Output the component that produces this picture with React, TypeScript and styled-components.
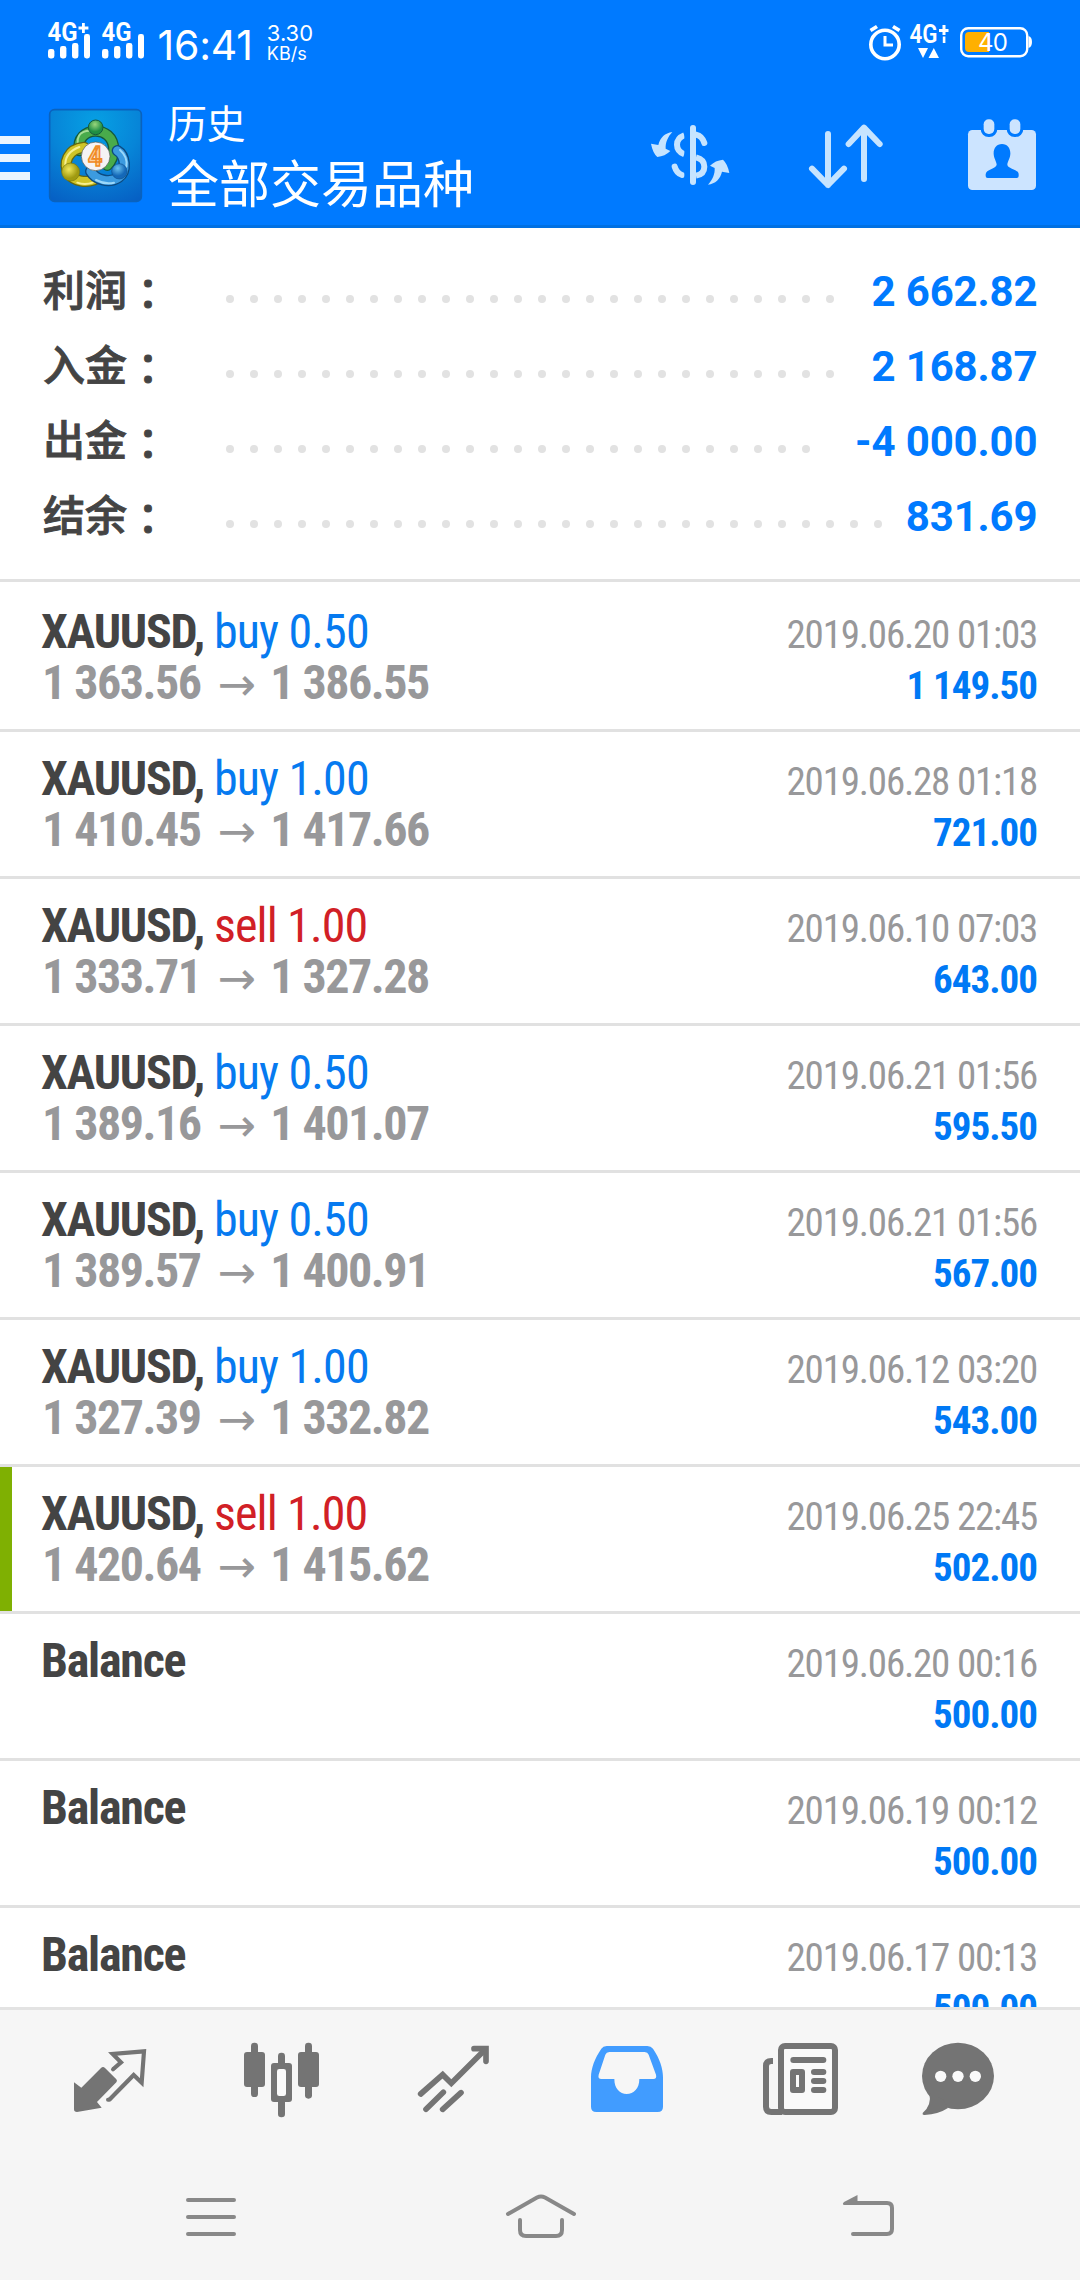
import React from 'react';
import styled, { createGlobalStyle } from 'styled-components';

const BLUE = '#007aff';
const CONDENSED = '"Roboto Condensed", Roboto, "Liberation Sans", sans-serif';
const STATUS_FONT = 'Inter, Roboto, sans-serif';

const GlobalStyle = createGlobalStyle`
  body { margin: 0; background: #fff; }
  svg { display: block; flex: none; overflow: visible; }
`;

const Screen = styled.div`
  width: 1080px;
  height: 2280px;
  display: flex;
  flex-direction: column;
  overflow: hidden;
  background: #fff;
`;

/* ---------- status bar ---------- */

const StatusBar = styled.header`
  flex: none;
  box-sizing: border-box;
  height: 84px;
  padding: 22px 48px 0;
  display: flex;
  align-items: flex-start;
  color: #fff;
  background: ${BLUE};
  font-family: ${STATUS_FONT};
`;

const Signals = styled.div`
  display: flex;
  gap: 12px;
`;

const Clock = styled.div`
  margin: 0 14px 0 13.5px;
  font-size: 41px;
  line-height: 46px;
  letter-spacing: -0.2px;
`;

const Speed = styled.div`
  padding-top: 2px;
  display: flex;
  flex-direction: column;
`;

const SpeedLine = styled.span<{ $size: number }>`
  font-size: ${(p) => p.$size}px;
  line-height: 19.5px;
`;

const StatusIcons = styled.div`
  margin-left: auto;
  padding-top: 2px;
  display: flex;
  align-items: flex-start;
`;

const DataSlot = styled.div`
  margin: 0 11px 0 8px;
`;

const BatterySlot = styled.div`
  padding-top: 3px;
`;

/* ---------- app bar ---------- */

const AppBar = styled.div`
  flex: none;
  box-sizing: border-box;
  height: 144px;
  padding-right: 42px;
  display: flex;
  align-items: flex-start;
  color: #fff;
  background: ${BLUE};
  border-bottom: 3px solid #0070e2;
`;

const MenuButton = styled.div`
  width: 30px;
  padding-top: 52px;
  display: flex;
  flex-direction: column;
  gap: 10px;
`;

const MenuLine = styled.span`
  height: 8px;
  background: #eaf5ff;
`;

const LogoSlot = styled.div`
  margin: 25px 26px 0 19px;
`;

const Titles = styled.div`
  padding-top: 11px;
  display: flex;
  flex-direction: column;
  font-family: "Noto Sans CJK SC", sans-serif;
`;

const Subtitle = styled.div`
  font-size: 39px;
  line-height: 52px;
  letter-spacing: -0.5px;
`;

const Title = styled.h1`
  margin: 0;
  font-size: 51px;
  font-weight: 400;
  line-height: 69px;
`;

const Actions = styled.div`
  margin-left: auto;
  padding-top: 34px;
  display: grid;
  grid-template-columns: 156px 160px 72px;
  align-items: center;
`;

/* ---------- summary ---------- */

const Summary = styled.section`
  flex: none;
  padding: 26px 42.5px 25px 43px;
  border-bottom: 3px solid #e1e1e1;
`;

const SummaryRow = styled.div`
  height: 75px;
  display: flex;
  align-items: baseline;
`;

const Label = styled.div`
  width: 175px;
  color: #444;
  font: 500 42px/50px "Noto Sans CJK SC", sans-serif;
  -webkit-text-stroke: 0.9px #444;
`;

const Colon = styled.span`
  font-family: "Noto Sans CJK JP", sans-serif;
  line-height: 1;
  vertical-align: -4px;
`;

const Leader = styled.div`
  align-self: flex-start;
  padding-top: 41px;
  display: flex;
`;

const Dot = styled.i`
  width: 8px;
  height: 8px;
  margin: 0 8.01px;
  border-radius: 50%;
  background: #e2e2e2;
`;

const Total = styled.div`
  margin-left: auto;
  color: ${BLUE};
  font: 700 42px/75px Roboto, sans-serif;
  letter-spacing: -0.15px;
`;

/* ---------- deals ---------- */

const DealList = styled.section`
  height: 1425px;
  flex: none;
  overflow: hidden;
`;

const Deal = styled.article<{ $marked?: boolean }>`
  box-sizing: border-box;
  height: 147px;
  display: flex;
  border-top: 3px solid #e1e1e1;
  background: ${(p) => (p.$marked ? 'linear-gradient(#7fb002, #7fb002) left / 12px 100% no-repeat' : 'none')};
  &:first-child { border-top-color: transparent; }
`;

const DealMain = styled.div`
  padding: 21px 0 0 42px;
  font: 700 48px/51px ${CONDENSED};
  letter-spacing: -1.5px;
  white-space: nowrap;
`;

const DealName = styled.div`
  margin-left: -1px;
  letter-spacing: -1.25px;
  color: #444;
`;

const Side = styled.span<{ $sell?: boolean }>`
  font-weight: 400;
  letter-spacing: -0.85px;
  color: ${(p) => (p.$sell ? '#d12026' : '#067af0')};
`;

const Prices = styled.div`
  color: #98989a;
`;

const Arrow = styled.span`
  margin: 0 4.4px 0 7.6px;
  font: 400 46px/1 "DejaVu Sans", sans-serif;
  letter-spacing: 0;
  vertical-align: -1px;
`;

const DealSide = styled.div`
  margin-left: auto;
  padding: 25px 43px 0 0;
  text-align: right;
  font: 400 39px/51px ${CONDENSED};
  white-space: nowrap;
`;

const DateText = styled.div`
  color: #98989a;
  letter-spacing: -1.2px;
`;

const Amount = styled.div`
  color: #0079f5;
  font-weight: 700;
  letter-spacing: -1px;
`;

/* ---------- bottom bars ---------- */

const TabBar = styled.nav`
  flex: none;
  box-sizing: border-box;
  height: 153px;
  padding: 30px 84px 0 72px;
  display: grid;
  grid-template-columns: 170px 174px 173px 172px 159px 76px;
  align-items: start;
  background: #f6f6f6;
  border-top: 3px solid #e3e3e3;
`;

const SystemBar = styled.nav`
  flex: none;
  box-sizing: border-box;
  height: 120px;
  padding: 30px 0 0 184px;
  display: grid;
  grid-template-columns: 320px 336px 60px;
  align-items: start;
  background: #f5f5f5;
`;

/* ---------- icons ---------- */

const Signal = ({ plus }: { plus?: boolean }) => (
  <svg width="42" height="37" viewBox="0 0 42 37" fill="#fff">
    <text x="-0.500" y="19" fontFamily="Roboto, sans-serif" fontSize="25" fontWeight="700" textLength="30" lengthAdjust="spacingAndGlyphs">4G</text>
    {plus && <path d="M34 1h2.800v3.600H40.400v2.800H36.800V11H34V7.400H30.500V4.600H34z" />}
    <rect x="0" y="27" width="6.400" height="9.500" rx="2.400" />
    <rect x="12" y="24" width="6.400" height="12.500" rx="2.400" />
    <rect x="24" y="21" width="6.400" height="15.500" rx="2.400" />
    <rect x="36" y="12" width="6" height="24.500" rx="2.400" />
  </svg>
);

const Alarm = () => (
  <svg width="32" height="37" viewBox="0 0 32 37" fill="none" stroke="#fff">
    <circle cx="16" cy="20.500" r="14.200" strokeWidth="3.600" />
    <path d="M16 12v9h8" strokeWidth="3" />
    <path d="M1.500 6.500L8 2.500M30.500 6.500L24 2.500" strokeWidth="3.800" />
  </svg>
);

const MobileData = () => (
  <svg width="40" height="37" viewBox="0 0 40 37" fill="#fff">
    <text x="0.500" y="19" fontFamily="Roboto, sans-serif" fontSize="25" fontWeight="600" textLength="28" lengthAdjust="spacingAndGlyphs">4G</text>
    <path d="M33.500 1h3v4h3v3h-3v3h-3V8h-3.500V5h3.500zM33.800 12.500h2.600V19h-2.600z" />
    <path d="M9 24h10l-5 10zM19.500 34h10.500l-5.200-10z" />
  </svg>
);

const Battery = () => (
  <svg width="72" height="31" viewBox="0 0 72 31">
    <rect x="1.200" y="1.200" width="66" height="28" rx="7" fill="none" stroke="#fff" strokeWidth="2.400" />
    <path d="M68.500 9q3.500 1 3.500 6t-3.500 6z" fill="#fff" />
    <path d="M9 5H29V25H9q-4 0-4-4V9q0-4 4-4z" fill="#ffb000" />
    <text x="33" y="24" textAnchor="middle" fontFamily="Inter, sans-serif" fontSize="24" fill="#fff" textLength="30">40</text>
  </svg>
);

const Logo = () => (
  <svg width="93" height="93" viewBox="27 27 279 279">
    <defs>
      <radialGradient id="tile" cx="50%" cy="15%" r="95%">
        <stop offset="0" stopColor="#06a0e4" />
        <stop offset="0.500" stopColor="#0785d8" />
        <stop offset="1" stopColor="#0660c4" />
      </radialGradient>
      <radialGradient id="green" cx="45%" cy="30%"><stop offset="0" stopColor="#9ad67c" /><stop offset="1" stopColor="#1f8f45" /></radialGradient>
      <radialGradient id="yellow" cx="40%" cy="35%"><stop offset="0" stopColor="#f0e75a" /><stop offset="1" stopColor="#a09a10" /></radialGradient>
      <radialGradient id="sky" cx="40%" cy="30%"><stop offset="0" stopColor="#6cc3f0" /><stop offset="1" stopColor="#1468b8" /></radialGradient>
    </defs>
    <rect x="29" y="29" width="275" height="275" rx="14" fill="url(#tile)" stroke="#0a62bd" strokeWidth="5" />
    <g fill="none" strokeLinecap="round">
      <path d="M118 152C104 78 222 70 221 150Q220 178 202 196" stroke="#15593c" strokeWidth="34" />
      <path d="M118 152C104 78 222 70 221 150Q220 178 202 196" stroke="#49ab4b" strokeWidth="26" />
      <path d="M113 128C110 92 146 88 167 96" stroke="#a6dd95" strokeWidth="6" />
      <path d="M132 142C84 146 66 190 88 222C104 246 140 248 162 240" stroke="#66680f" strokeWidth="34" />
      <path d="M132 142C84 146 66 190 88 222C104 246 140 248 162 240" stroke="#cfc427" strokeWidth="26" />
      <path d="M118 141C88 152 74 174 76 200M112 248Q134 256 158 248" stroke="#f6ef90" strokeWidth="6" />
      <path d="M232 152C256 166 262 214 236 232C206 252 166 238 152 214" stroke="#0c4a80" strokeWidth="34" />
      <path d="M232 152C256 166 262 214 236 232C206 252 166 238 152 214" stroke="#3c9be0" strokeWidth="26" />
      <path d="M240 150C256 164 262 184 259 200M168 240Q194 254 222 248" stroke="#9ad8fa" strokeWidth="6" />
    </g>
    <circle cx="167" cy="82" r="22" fill="url(#green)" stroke="#15593c" strokeWidth="3" />
    <circle cx="92" cy="216" r="27" fill="url(#yellow)" stroke="#77780f" strokeWidth="2" />
    <circle cx="238" cy="214" r="23" fill="url(#sky)" stroke="#0f4f8c" strokeWidth="2" />
    <circle cx="167" cy="169" r="43" fill="#f5f3f5" stroke="#4c5148" strokeWidth="2" />
    <text x="144" y="199" fontFamily="Roboto, sans-serif" fontSize="84" fontWeight="700" textLength="43" lengthAdjust="spacingAndGlyphs" fill="#fbd0a0" stroke="#f08a24" strokeWidth="5">4</text>
  </svg>
);

const CurrencyIcon = () => (
  <svg width="80" height="64" viewBox="30 36 240 192" fill="#c6e4ff">
    <g fill="none" stroke="#c6e4ff" strokeWidth="18" strokeLinecap="round">
      <path d="M133 73C118 79 111 89 111 101C111 115 119 124 133 130" strokeLinecap="butt" />
      <path d="M168 71C181 74 189 83 193 96" />
      <path d="M168 139C185 143 193 153 193 167C193 182 184 191 168 194" strokeLinecap="butt" />
      <path d="M104 167C108 181 117 189 126 192" />
      <path d="M159 51V213" />
    </g>
    <path d="M133 60h17v145h-17z" fill={BLUE} />
    <path d="M97 63C75 66 60 80 55 102L33 98Q38 125 52 138Q75 136 91 120L77 113C76 95 83 78 97 63Z" />
    <path d="M204 221C226 218 241 204 246 182L268 186Q263 159 249 146Q226 148 210 164L224 171C225 189 218 206 204 221Z" />
  </svg>
);

const SortIcon = () => (
  <svg width="80" height="64" viewBox="498 36 240 192" fill="none" stroke="#c6e4ff" strokeWidth="18" strokeLinecap="round" strokeLinejoin="round">
    <path d="M564 69V222M516 173L564 222L612 173M672 204V50M626 99L672 50L719 99" />
  </svg>
);

const CalendarIcon = () => (
  <svg width="72" height="74" viewBox="978 24 216 222" fill="#cce4ff">
    <rect x="984" y="60" width="204" height="180" rx="13" />
    <rect x="1031" y="28" width="32" height="44" rx="15" stroke={BLUE} strokeWidth="18" paintOrder="stroke" />
    <rect x="1109" y="28" width="32" height="44" rx="15" stroke={BLUE} strokeWidth="18" paintOrder="stroke" />
    <path fill={BLUE} d="M1086 102C1103 102 1112 116 1111 132C1110 147 1103 153 1102 164C1103 176 1136 178 1136 193V198Q1136 204 1130 204H1043Q1037 204 1037 198V193C1037 178 1069 176 1070 164C1069 153 1062 147 1061 132C1060 116 1069 102 1086 102Z" />
  </svg>
);

const GREY = '#747474';

const QuotesIcon = () => (
  <svg width="76" height="78" viewBox="36 30 228 234">
    <path d="M42 157L64 173L123 114Q129 108 135 114L169 148Q173 153 169 157L111 216L125 233L51 246Q42 246 42 238Z" fill={GREY} />
    <path d="M160 117L183 97L158 72L252 64L245 158L221 135L148 209" fill="none" stroke={GREY} strokeWidth="12.500" />
    <path d="M160 117l-1 1M148 209l-4 0" stroke={GREY} strokeWidth="12" strokeLinecap="round" />
  </svg>
);

const CandlesIcon = () => (
  <svg width="79" height="78" viewBox="546 30 237 234" fill={GREY}>
    <rect x="552" y="66" width="63" height="105" rx="9" />
    <rect x="573" y="38" width="21" height="163" rx="10" />
    <rect x="714" y="66" width="63" height="105" rx="9" />
    <rect x="735" y="38" width="21" height="168" rx="10" />
    <rect x="654" y="68" width="21" height="194" rx="10" />
    <rect x="633" y="99" width="63" height="117" rx="9" />
    <rect x="651" y="117" width="27" height="81" rx="7" fill="#fafafa" />
  </svg>
);

const TrendIcon = () => (
  <svg width="75" height="78" viewBox="1068 30 225 234" fill="none" stroke={GREY} strokeWidth="17" strokeLinecap="round">
    <path d="M1082 192L1148 134L1174 160L1274 60" />
    <path d="M1242 56H1278V94" />
    <path d="M1098 238L1150 187M1148 238L1203 188" />
  </svg>
);

const InboxIcon = () => (
  <svg width="76" height="78" viewBox="57 30 228 234" fill="#419cff">
    <path fillRule="evenodd" d="M110 48H232Q243 48 249 56C269 85 279 115 279 142V230Q279 246 263 246H79Q63 246 63 230V142C63 115 74 85 94 56Q99 48 110 48ZM118 66Q109 66 106 74L86 134Q83 147 94 147H133C133 176 150 192 170 192C191 192 208 176 208 147H250Q261 147 258 134L236 74Q233 66 224 66Z" />
  </svg>
);

const NewsIcon = () => (
  <svg width="79" height="78" viewBox="573 30 237 234" fill={GREY}>
    <rect x="633" y="48" width="162" height="198" rx="12" fill="#fafafa" stroke={GREY} strokeWidth="18" />
    <path d="M609 93H604Q588 93 588 108V230Q588 246 604 246H636" fill="none" stroke={GREY} strokeWidth="18" />
    <rect x="661" y="81" width="108" height="18" rx="9" />
    <path fillRule="evenodd" d="M669 117H696Q705 117 705 126V180Q705 189 696 189H669Q660 189 660 180V126Q660 117 669 117ZM678 135V171H687V135Z" />
    <rect x="723" y="117" width="46" height="18" rx="9" />
    <rect x="723" y="144" width="46" height="18" rx="9" />
    <rect x="723" y="171" width="46" height="18" rx="9" />
  </svg>
);

const ChatIcon = () => (
  <svg width="76" height="78" viewBox="1050 30 228 234" fill={GREY}>
    <ellipse cx="1164" cy="138" rx="108" ry="99.500" />
    <path d="M1078 190Q1086 226 1058 249Q1056 256 1064 255Q1105 253 1134 234L1120 210Z" />
    <g fill="#fafafa">
      <circle cx="1112" cy="139" r="17" />
      <circle cx="1164" cy="139" r="17" />
      <circle cx="1216" cy="139" r="17" />
    </g>
  </svg>
);

const RecentsIcon = () => (
  <svg width="54" height="54" viewBox="184 2190 54 54" stroke="#888" strokeWidth="4" strokeLinecap="round">
    <path d="M188 2200H234M188 2217H234M188 2234H234" />
  </svg>
);

const HomeIcon = () => (
  <svg width="76" height="54" viewBox="504 2190 76 54" fill="none" stroke="#888" strokeWidth="4" strokeLinecap="round">
    <path d="M508 2214L537 2197.500Q541 2195.500 545 2197.500L574 2214" />
    <path d="M520 2220V2230Q520 2236 526 2236H556Q562 2236 562 2230V2220" />
  </svg>
);

const BackIcon = () => (
  <svg width="60" height="54" viewBox="840 2190 60 54" fill="none" stroke="#888" strokeWidth="4" strokeLinecap="round">
    <path d="M856 2203H887Q892 2203 892 2208V2229Q892 2234 887 2234H853" />
    <path d="M843.500 2205Q842 2203.500 844 2202L857.500 2195V2205Z" fill="#888" stroke="none" />
  </svg>
);

/* ---------- data ---------- */

const totals = [
  { label: '利润', value: '2 662.82', dots: 26 },
  { label: '入金', value: '2 168.87', dots: 26 },
  { label: '出金', value: '-4 000.00', dots: 25 },
  { label: '结余', value: '831.69', dots: 28 },
];

type DealData = {
  name: string;
  side?: 'buy' | 'sell';
  lots?: string;
  open?: string;
  close?: string;
  date: string;
  amount: string;
  marked?: boolean;
};

const deals: DealData[] = [
  { name: 'XAUUSD', side: 'buy', lots: '0.50', open: '1 363.56', close: '1 386.55', date: '2019.06.20 01:03', amount: '1 149.50' },
  { name: 'XAUUSD', side: 'buy', lots: '1.00', open: '1 410.45', close: '1 417.66', date: '2019.06.28 01:18', amount: '721.00' },
  { name: 'XAUUSD', side: 'sell', lots: '1.00', open: '1 333.71', close: '1 327.28', date: '2019.06.10 07:03', amount: '643.00' },
  { name: 'XAUUSD', side: 'buy', lots: '0.50', open: '1 389.16', close: '1 401.07', date: '2019.06.21 01:56', amount: '595.50' },
  { name: 'XAUUSD', side: 'buy', lots: '0.50', open: '1 389.57', close: '1 400.91', date: '2019.06.21 01:56', amount: '567.00' },
  { name: 'XAUUSD', side: 'buy', lots: '1.00', open: '1 327.39', close: '1 332.82', date: '2019.06.12 03:20', amount: '543.00' },
  { name: 'XAUUSD', side: 'sell', lots: '1.00', open: '1 420.64', close: '1 415.62', date: '2019.06.25 22:45', amount: '502.00', marked: true },
  { name: 'Balance', date: '2019.06.20 00:16', amount: '500.00' },
  { name: 'Balance', date: '2019.06.19 00:12', amount: '500.00' },
  { name: 'Balance', date: '2019.06.17 00:13', amount: '500.00' },
];

export default function App() {
  return (
    <Screen>
      <GlobalStyle />
      <StatusBar>
        <Signals>
          <Signal plus />
          <Signal />
        </Signals>
        <Clock>16:41</Clock>
        <Speed>
          <SpeedLine $size={22}>3.30</SpeedLine>
          <SpeedLine $size={18}>KB/s</SpeedLine>
        </Speed>
        <StatusIcons>
          <Alarm />
          <DataSlot><MobileData /></DataSlot>
          <BatterySlot><Battery /></BatterySlot>
        </StatusIcons>
      </StatusBar>
      <AppBar>
        <MenuButton>
          <MenuLine />
          <MenuLine />
          <MenuLine />
        </MenuButton>
        <LogoSlot><Logo /></LogoSlot>
        <Titles>
          <Subtitle>历史</Subtitle>
          <Title>全部交易品种</Title>
        </Titles>
        <Actions>
          <CurrencyIcon />
          <SortIcon />
          <CalendarIcon />
        </Actions>
      </AppBar>
      <Summary>
        {totals.map((t) => (
          <SummaryRow key={t.label}>
            <Label>{t.label}<Colon>：</Colon></Label>
            <Leader>{Array.from({ length: t.dots }, (_, i) => <Dot key={i} />)}</Leader>
            <Total>{t.value}</Total>
          </SummaryRow>
        ))}
      </Summary>
      <DealList>
        {deals.map((d) => (
          <Deal key={d.date + d.open} $marked={d.marked}>
            <DealMain>
              <DealName>
                {d.name}
                {d.side && <>, <Side $sell={d.side === 'sell'}>{d.side} {d.lots}</Side></>}
              </DealName>
              {d.open && <Prices>{d.open} <Arrow>→</Arrow> {d.close}</Prices>}
            </DealMain>
            <DealSide>
              <DateText>{d.date}</DateText>
              <Amount>{d.amount}</Amount>
            </DealSide>
          </Deal>
        ))}
      </DealList>
      <TabBar>
        <QuotesIcon />
        <CandlesIcon />
        <TrendIcon />
        <InboxIcon />
        <NewsIcon />
        <ChatIcon />
      </TabBar>
      <SystemBar>
        <RecentsIcon />
        <HomeIcon />
        <BackIcon />
      </SystemBar>
    </Screen>
  );
}
